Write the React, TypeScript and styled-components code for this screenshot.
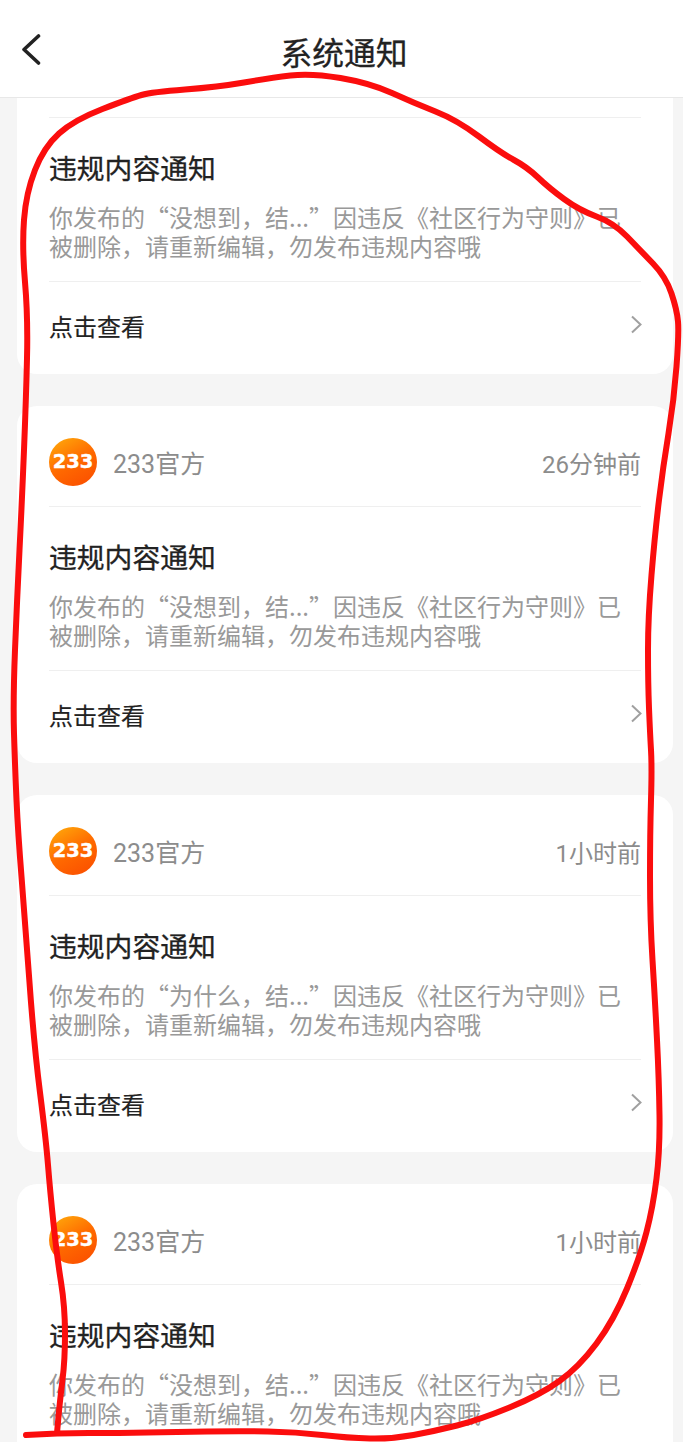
import React from "react";
import styled, { createGlobalStyle } from "styled-components";

const GlobalStyle = createGlobalStyle`
    html, body {
        margin: 0;
        padding: 0;
        background: #f5f5f5;
    }
    * {
        box-sizing: border-box;
    }
`;

const font = `Roboto, "Noto Sans CJK SC", sans-serif`;
const cjkFont = `"Noto Sans CJK SC", sans-serif`;

const notices = [
    { id: 1, quote: "没想到，结...", time: "26分钟前" },
    { id: 2, quote: "没想到，结...", time: "26分钟前" },
    { id: 3, quote: "为什么，结...", time: "1小时前" },
    { id: 4, quote: "没想到，结...", time: "1小时前" },
];

// the hand drawn red loop, traced from the picture
const loop: [number, number][] = [
    [26, 1435], [57, 1433], [120, 1433], [174, 1432], [240, 1431], [296, 1432], [348, 1438], [392, 1439],
    [435, 1431], [479, 1420], [540, 1395], [579, 1367], [614, 1320], [640, 1257], [653, 1207], [660, 1150],
    [659, 1080], [655, 1000], [650, 920], [650, 833], [652, 767], [650, 733], [648, 683], [648, 617],
    [655, 533], [663, 467], [674, 400], [679, 333], [677, 310], [666, 277], [640, 250], [614, 223],
    [579, 210], [549, 188], [527, 167], [501, 153], [457, 120], [414, 103], [370, 83], [311, 73],
    [270, 78], [218, 87], [152, 92], [131, 98], [74, 120], [44, 147], [26, 193], [22, 247],
    [28, 317], [26, 400], [22, 500], [17, 600], [13, 700], [15, 767], [18, 833], [25, 920],
    [34, 1045], [46, 1140], [50, 1190], [57, 1257], [65, 1307], [65, 1360], [60, 1400], [57, 1433],
];

const smoothPath = (pts: [number, number][]) => {
    let d = `M${pts[0][0]} ${pts[0][1]}`;
    for (let i = 1; i < pts.length - 1; i++) {
        const mx = (pts[i][0] + pts[i + 1][0]) / 2;
        const my = (pts[i][1] + pts[i + 1][1]) / 2;
        d += ` Q${pts[i][0]} ${pts[i][1]} ${mx} ${my}`;
    }
    const last = pts[pts.length - 1];
    return `${d} L${last[0]} ${last[1]}`;
};

const Scribble = () => (
    <ScribbleSvg viewBox="0 0 683 1442" fill="none">
        <path d={smoothPath(loop)} stroke="#fb0d0d" strokeWidth="6" strokeLinecap="round" strokeLinejoin="round" />
    </ScribbleSvg>
);

const NoticeCard = ({ quote, time }: { quote: string; time: string }) => (
    <Card>
        <CardHead>
            <Logo>
                <LogoText>233</LogoText>
            </Logo>
            <Sender>233官方</Sender>
            <Time>{time}</Time>
        </CardHead>
        <CardBody>
            <Title>违规内容通知</Title>
            <Desc>你发布的“{quote}”因违反《社区行为守则》已被删除，请重新编辑，勿发布违规内容哦</Desc>
        </CardBody>
        <CardFoot>
            <FootLabel>点击查看</FootLabel>
            <ArrowIcon width="11" height="19" viewBox="0 0 11 19" fill="none">
                <path d="M1 1.5 L9.5 9.5 L1 17.5" stroke="#a0a0a0" strokeWidth="2" />
            </ArrowIcon>
        </CardFoot>
    </Card>
);

export default function App() {
    return (
        <Page>
            <GlobalStyle />
            <Header>
                <BackButton>
                    <svg width="20" height="32" viewBox="0 0 20 32" fill="none">
                        <path d="M17.5 2 L3 15.5 L17.5 29" stroke="#222" strokeWidth="3.6" strokeLinecap="round" strokeLinejoin="round" />
                    </svg>
                </BackButton>
                <HeaderTitle>系统通知</HeaderTitle>
            </Header>
            <List>
                {notices.map((n) => (
                    <NoticeCard key={n.id} quote={n.quote} time={n.time} />
                ))}
            </List>
            <Scribble />
        </Page>
    );
}

const Page = styled.div`
    position: relative;
    width: 683px;
    height: 1442px;
    overflow: hidden;
    background: #f5f5f5;
    font-family: ${font};
`;
const Header = styled.header`
    position: relative;
    z-index: 1;
    height: 98px;
    background: #fff;
    border-bottom: 1px solid #e8e8e8;
    display: flex;
    align-items: center;
    justify-content: center;
    padding-top: 10px;
`;
const BackButton = styled.div`
    position: absolute;
    left: 21px;
    top: 34px;
    display: flex;
`;
const HeaderTitle = styled.h1`
    margin: 0 0 0 5px;
    font-size: 31.8px;
    font-weight: 400;
    color: #222;
    line-height: 40px;
    -webkit-text-stroke: 0.3px #222;
`;
const List = styled.div`
    display: flex;
    flex-direction: column;
    gap: 32px;
    margin-top: -81px;
    padding: 0 10px 0 17px;
`;
const Card = styled.section`
    height: 357px;
    flex: none;
    background: #fff;
    border-radius: 20px;
    padding: 0 32px;
    display: flex;
    flex-direction: column;
`;
const CardHead = styled.div`
    height: 101px;
    flex: none;
    display: flex;
    align-items: center;
    border-bottom: 1px solid #efefef;
`;
const Logo = styled.div`
    width: 48px;
    height: 48px;
    border-radius: 50%;
    background: linear-gradient(150deg, #ffa40a 8%, #ff6a00 50%, #fa4b00 100%);
    display: flex;
    align-items: center;
    justify-content: center;
    flex: none;
    margin-top: 12px;
`;
const LogoText = styled.span`
    font-family: "DejaVu Sans", sans-serif;
    font-size: 19.5px;
    font-weight: 700;
    color: #fff;
    line-height: 20px;
    margin-top: -1px;
    -webkit-text-stroke: 0.4px #fff;
`;
const Sender = styled.span`
    margin-left: 16px;
    margin-top: 17px;
    font-size: 25px;
    color: #8c8c8c;
    line-height: 32px;
`;
const Time = styled.span`
    margin-left: auto;
    margin-top: 17px;
    font-size: 24px;
    color: #8c8c8c;
    line-height: 32px;
`;
const CardBody = styled.div`
    height: 164px;
    flex: none;
    border-bottom: 1px solid #efefef;
    padding-top: 33px;
`;
const Title = styled.h2`
    margin: 0;
    font-size: 27.8px;
    font-weight: 400;
    line-height: 38px;
    color: #222;
    -webkit-text-stroke: 0.3px #222;
`;
const Desc = styled.p`
    margin: 13px 0 0;
    font-family: ${cjkFont};
    font-size: 24px;
    line-height: 29px;
    color: #999;
    width: 580px;
`;
const CardFoot = styled.div`
    flex: 1;
    display: flex;
    align-items: flex-start;
    justify-content: space-between;
    padding-top: 29px;
`;
const FootLabel = styled.span`
    font-size: 24px;
    line-height: 34px;
    color: #222;
    -webkit-text-stroke: 0.2px #222;
`;
const ArrowIcon = styled.svg`
    margin-top: 4px;
    margin-right: -1px;
`;
const ScribbleSvg = styled.svg`
    position: absolute;
    left: 0;
    top: 0;
    width: 683px;
    height: 1442px;
    z-index: 2;
    pointer-events: none;
`;
